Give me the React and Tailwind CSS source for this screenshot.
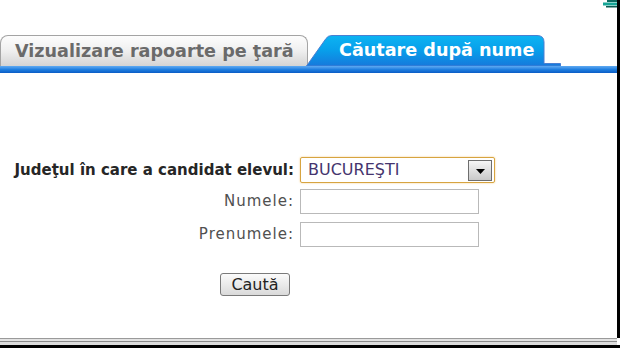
export default function App() {
  return (
    <div className="w-[620px] h-[348px] bg-white flex flex-col overflow-hidden font-['DejaVu_Sans',sans-serif]">
      <div className="flex-1 flex">
        <div className="relative flex-1 flex flex-col">
          <svg className="absolute top-0 right-0" width="14" height="9" viewBox="0 0 14 9">
            <rect x="4" y="0" width="10" height="2" fill="#0c6a60" />
            <rect x="0" y="2.5" width="14" height="3" fill="#17a596" />
            <rect x="3" y="6" width="11" height="1.5" fill="#0d5a52" />
          </svg>
          <div className="h-[35px]" />
          <div className="flex items-end h-[31px]">
            <div className="w-[308px] h-[31px] rounded-t-[8px] border border-b-0 border-[#a4a4a4] bg-gradient-to-b from-[#fdfdfd] via-[#efefef] to-[#d4d4d4] flex items-center pl-[14px] pt-[1px]">
              <span className="text-[17.6px] font-bold text-[#6a6a6a] whitespace-nowrap leading-none">Vizualizare rapoarte pe ţară</span>
            </div>
            <div className="relative -ml-[2px] w-[255px] h-[31px] flex items-center pl-[33px] pt-[1px]">
              <svg className="absolute inset-0" width="255" height="31" viewBox="0 0 255 31">
                <defs>
                  <linearGradient id="tabg" x1="0" y1="0" x2="0" y2="1">
                    <stop offset="0" stopColor="#0cb4f2" />
                    <stop offset="0.5" stopColor="#089eea" />
                    <stop offset="1" stopColor="#1679dc" />
                  </linearGradient>
                </defs>
                <path d="M0.5 31 L20 3.5 Q22 0.5 26 0.5 L231 0.5 Q238 0.5 238 7 L238 28.5 L254.5 28.5 L254.5 31 Z" fill="url(#tabg)" stroke="#4a7fd2" strokeWidth="1" />
              </svg>
              <span className="relative text-[17.6px] font-bold text-white whitespace-nowrap leading-none">Căutare după nume</span>
            </div>
          </div>
          <div className="h-[7px] bg-gradient-to-b from-[#5eaaf2] via-[#1f7fe0] to-[#0b5cc6]" />
          <div className="flex-1 flex flex-col pt-[84px]">
            <div className="flex items-center h-[26px]">
              <span className="w-[294px] text-right text-[15px] font-bold text-[#262626] whitespace-nowrap">Judeţul în care a candidat elevul:</span>
              <div className="ml-[6px] w-[195px] h-[26px] border border-[#d7a440] rounded-[2px] shadow-[0_0_2px_#f2c779] flex items-center">
                <span className="flex-1 pl-[7px] text-[16px] text-[#45356e] leading-none">BUCUREŞTI</span>
                <div className="w-[24px] h-[21px] mr-[2px] border border-[#6e6e6e] bg-gradient-to-b from-[#f6f6f6] to-[#c9c9c9] flex items-center justify-center">
                  <svg width="9" height="5" viewBox="0 0 9 5" className="mt-[3px]">
                    <path d="M0 0 L9 0 L4.5 5 Z" fill="#000" />
                  </svg>
                </div>
              </div>
            </div>
            <div className="flex items-center h-[25px] mt-[6px]">
              <span className="w-[294px] text-right text-[15px] tracking-[1px] text-[#505050]">Numele:</span>
              <div className="ml-[6px] w-[179px] h-[25px] border border-[#b9b9b9] bg-white" />
            </div>
            <div className="flex items-center h-[25px] mt-[8px]">
              <span className="w-[294px] text-right text-[15px] tracking-[1px] text-[#505050]">Prenumele:</span>
              <div className="ml-[6px] w-[179px] h-[25px] border border-[#b9b9b9] bg-white" />
            </div>
            <div className="mt-[26px] pl-[220px]">
              <button className="w-[70px] h-[23px] border border-[#7a7a7a] rounded-[3px] bg-gradient-to-b from-[#fbfbfb] to-[#dadada] text-[16px] text-[#222] leading-none flex items-center justify-center">Caută</button>
            </div>
          </div>
        </div>
        <div className="w-[3px] bg-black" />
      </div>
      <div className="h-[1px] bg-[#9a9a9a] mr-[3px]" />
      <div className="h-[2px] bg-[#e2e2e2] mr-[3px]" />
      <div className="h-[1px] bg-[#8a8a8a] mr-[3px]" />
      <div className="h-[3px] bg-[#dcdcdc] mr-[3px]" />
      <div className="h-[3px] bg-black" />
    </div>
  );
}
